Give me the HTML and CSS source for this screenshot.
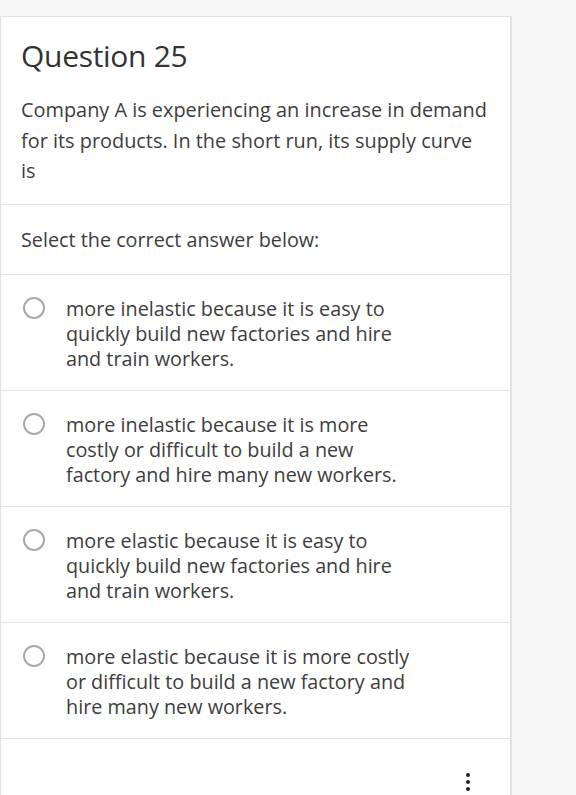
FILE: index.html
```html
<!DOCTYPE html>
<html lang="en">
<head>
<meta charset="utf-8">
<title>Question 25</title>
<link rel="stylesheet" href="styles.css">
</head>
<body>
<div class="card">
  <div class="section header">
    <h2 class="title">Question 25</h2>
    <p class="prompt">Company A is experiencing an increase in demand for its products. In the short run, its supply curve is</p>
  </div>
  <div class="section instruction">Select the correct answer below:</div>
  <div class="section option">
    <span class="radio"></span>
    <span class="option-text">more inelastic because it is easy to quickly build new factories and hire and train workers.</span>
  </div>
  <div class="section option">
    <span class="radio"></span>
    <span class="option-text">more inelastic because it is more costly or difficult to build a new factory and hire many new workers.</span>
  </div>
  <div class="section option">
    <span class="radio"></span>
    <span class="option-text">more elastic because it is easy to quickly build new factories and hire and train workers.</span>
  </div>
  <div class="section option">
    <span class="radio"></span>
    <span class="option-text">more elastic because it is more costly or difficult to build a new factory and hire many new workers.</span>
  </div>
  <div class="section footer">
    <span class="more" aria-label="More options"><i></i><i></i><i></i></span>
  </div>
</div>
</body>
</html>
```
FILE: styles.css
```css
html, body {
  margin: 0;
  padding: 0;
  background: #f7f7f7;
}
body {
  font-family: "Open Sans", "Liberation Sans", sans-serif;
  color: #3d3d3d;
  height: 795px;
  overflow: hidden;
}
.card {
  margin-top: 16px;
  width: 509px;
  background: #fff;
  border: 1px solid #e2e2e2;
  border-right-width: 2px;
  border-bottom: none;
}
.section {
  border-top: 1px solid #e2e2e2;
}
.section:first-child {
  border-top: none;
}
.header {
  padding: 21px 21px 17px 20px;
}
.title {
  margin: 0;
  font-size: 30px;
  line-height: 36px;
  font-weight: 500;
  color: #333;
  letter-spacing: -0.3px;
}
.prompt {
  margin: 21px 0 0;
  font-size: 19.9px;
  line-height: 30.5px;
}
.instruction {
  padding: 22px 20px 21px;
  font-size: 19.8px;
  line-height: 26px;
}
.option {
  display: flex;
  align-items: flex-start;
  gap: 21px;
  padding: 21px 20px 19px 22px;
  font-size: 19.8px;
  line-height: 25px;
}
.radio {
  flex: none;
  width: 18px;
  height: 18px;
  border: 2px solid #a9a9a9;
  border-radius: 50%;
  margin-top: 1px;
}
.option-text {
  width: 356px;
}
.footer {
  height: 60px;
  display: flex;
  justify-content: flex-end;
  padding-right: 40px;
}
.more {
  display: flex;
  flex-direction: column;
  gap: 3px;
  margin-top: 34px;
}
.more i {
  display: block;
  width: 4px;
  height: 4px;
  border-radius: 50%;
  background: #222;
}
```
